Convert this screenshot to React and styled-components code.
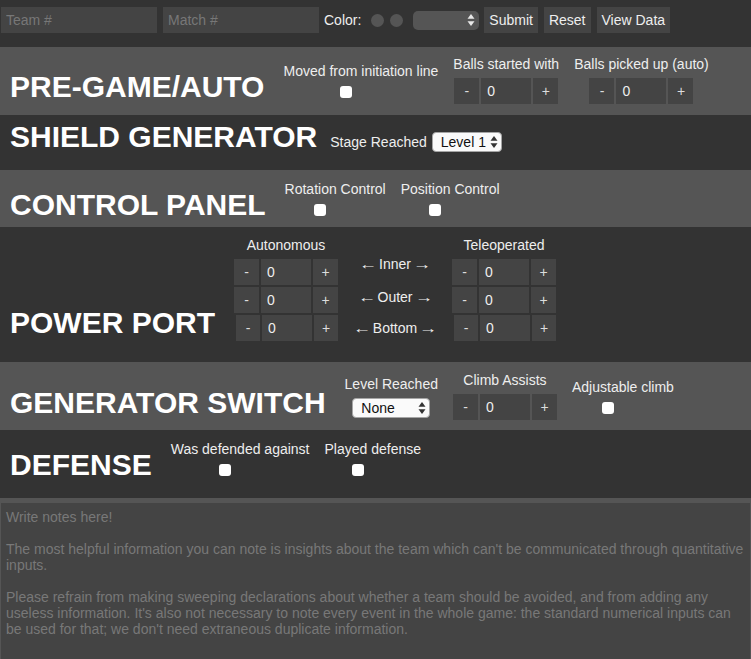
import React from "react";
import styled, { createGlobalStyle } from "styled-components";

const GlobalStyle = createGlobalStyle`
  html, body {
    margin: 0;
    padding: 0;
    background: #333;
    overflow: hidden;
  }
  body {
    font-family: "Liberation Sans", Arial, sans-serif;
    font-size: 14px;
    color: #eee;
  }
  * {
    box-sizing: border-box;
  }
`;

const TopBar = styled.div`
  display: flex;
  align-items: center;
  gap: 6px;
  height: 47px;
  padding: 7px 0 14px 1px;
`;

const TextInput = styled.input`
  width: 156px;
  height: 26px;
  margin: 0;
  padding: 0 5px;
  border: none;
  background: #444;
  color: #eee;
  font: 14px "Liberation Sans", Arial, sans-serif;
  &::placeholder {
    color: #777;
  }
`;

const ColorLabel = styled.span`
  margin: 0 4px 0 -1px;
  line-height: 16px;
`;

const ColorDot = styled.input`
  appearance: none;
  width: 13px;
  height: 13px;
  margin: 0;
  border-radius: 50%;
  background: #555;
`;

const SelectWrap = styled.div`
  position: relative;
  display: flex;
  margin: ${p => p.$margin || "0"};
`;

const Select = styled.select`
  appearance: none;
  width: ${p => p.$w}px;
  height: ${p => p.$h || 20}px;
  margin: 0;
  padding: 0 0 0 8px;
  border: ${p => (p.$dark ? "none" : "1px solid #a5a5a5")};
  border-radius: ${p => (p.$dark ? 5 : 4)}px;
  background: ${p => (p.$dark ? "#555" : "#fafafa")};
  color: #111;
  font: 14px "Liberation Sans", Arial, sans-serif;
  outline: none;
`;

const ArrowIcon = styled.svg`
  position: absolute;
  right: 4px;
  top: 50%;
  transform: translateY(-50%);
  pointer-events: none;
`;

const UpDown = ({ color }) => (
  <ArrowIcon width="8" height="12" viewBox="0 0 8 12">
    <polygon points="4,0 7.5,4.8 0.5,4.8" fill={color} />
    <polygon points="0.5,7.2 7.5,7.2 4,12" fill={color} />
  </ArrowIcon>
);

const BarButton = styled.button`
  height: 26px;
  margin: 0;
  padding: 0 5px;
  border: none;
  background: #444;
  color: #eee;
  font: 14px "Liberation Sans", Arial, sans-serif;
`;

const Section = styled.section`
  display: flex;
  align-items: flex-end;
  gap: 15px;
  height: ${p => p.$h}px;
  padding: 0 10px ${p => p.$pb}px;
  background: ${p => (p.$light ? "#555" : "#333")};
`;

const Title = styled.h2`
  margin: 0 ${p => p.$mr ?? 4}px 3px 0;
  font-size: 30px;
  line-height: 30px;
  font-weight: bold;
  color: #fff;
  white-space: nowrap;
`;

const Field = styled.div`
  display: flex;
  flex-direction: column;
  align-items: center;
  gap: ${p => p.$gap || 6}px;
`;

const InlineField = styled.div`
  display: flex;
  align-items: flex-end;
  gap: 5px;
`;

const Label = styled.span`
  line-height: 16px;
  white-space: nowrap;
  margin-bottom: ${p => p.$mb || 0}px;
`;

const Check = styled.input`
  appearance: none;
  width: 12px;
  height: 12px;
  margin: 0 30px 7px 0;
  border-radius: 3px;
  background: #fff;
`;

const CounterRow = styled.div`
  display: flex;
  gap: 2px;
  margin: 0 0 ${p => p.$mb ?? 1}px ${p => p.$nudge || 0}px;
`;

const StepButton = styled.button`
  width: 25px;
  height: 26px;
  margin: 0;
  padding: 0;
  border: none;
  background: #444;
  color: #ddd;
  font: 14px "Liberation Sans", Arial, sans-serif;
`;

const CountInput = styled.input`
  width: 50px;
  height: 26px;
  margin: 0;
  padding: 0 6px;
  border: none;
  background: #444;
  color: #eee;
  font: 14px "Liberation Sans", Arial, sans-serif;
`;

const PortGrid = styled.div`
  display: grid;
  grid-template-columns: 104px 114px 104px;
  grid-template-rows: 16px 26px 26px 26px;
  row-gap: 2px;
`;

const ColumnHead = styled.span`
  grid-column: ${p => p.$col};
  justify-self: center;
  line-height: 16px;
  margin-top: -4px;
`;

const PortLabel = styled.span`
  display: flex;
  align-items: baseline;
  gap: 4px;
  justify-self: center;
  align-self: start;
  line-height: 16px;
  white-space: nowrap;
  margin-top: ${p => p.$top}px;
`;

const Arrow = styled.span`
  display: inline-block;
  width: 14px;
  text-align: center;
  transform: scaleX(1.3);
`;

const Notes = styled.textarea`
  display: block;
  width: 100%;
  height: 165px;
  margin: 0;
  padding: 6px 5px;
  border: 1px solid #555;
  border-top-width: 5px;
  background: #444;
  color: #eee;
  font: 14px/16px "Liberation Sans", Arial, sans-serif;
  resize: none;
  &::placeholder {
    color: #787878;
  }
`;

const Counter = ({ nudge, mb }) => (
  <CounterRow $nudge={nudge} $mb={mb}>
    <StepButton>-</StepButton>
    <CountInput defaultValue="0" />
    <StepButton>+</StepButton>
  </CounterRow>
);

const CheckField = ({ label }) => (
  <Field $gap={7}>
    <Label>{label}</Label>
    <Check type="checkbox" />
  </Field>
);

const CounterField = ({ label }) => (
  <Field>
    <Label>{label}</Label>
    <Counter />
  </Field>
);

const portRows = [
  { name: "Inner", top: -3, nudge: 0 },
  { name: "Outer", top: 2, nudge: 0 },
  { name: "Bottom", top: 5, nudge: 2 }
];

const notesText =
  "Write notes here!\n\nThe most helpful information you can note is insights about the team which can't be communicated through quantitative inputs.\n\nPlease refrain from making sweeping declarations about whether a team should be avoided, and from adding any useless information. It's also not necessary to note every event in the whole game: the standard numerical inputs can be used for that; we don't need extraneous duplicate information.";

const App = () => (
  <>
    <GlobalStyle />
    <TopBar>
      <TextInput placeholder="Team #" />
      <TextInput placeholder="Match #" />
      <ColorLabel>Color:</ColorLabel>
      <ColorDot type="radio" name="color" />
      <ColorDot type="radio" name="color" />
      <SelectWrap $margin="0 -1px 0 4px">
        <Select $dark $w={66} $h={19} defaultValue="">
          <option value=""></option>
        </Select>
        <UpDown color="#e8e8e8" />
      </SelectWrap>
      <BarButton>Submit</BarButton>
      <BarButton>Reset</BarButton>
      <BarButton>View Data</BarButton>
    </TopBar>

    <Section $light $h={68} $pb={10}>
      <Title>PRE-GAME/AUTO</Title>
      <CheckField label="Moved from initiation line" />
      <CounterField label="Balls started with" />
      <CounterField label="Balls picked up (auto)" />
    </Section>

    <Section $h={55} $pb={15}>
      <Title $mr={-2}>SHIELD GENERATOR</Title>
      <InlineField>
        <Label $mb={5}>Stage Reached</Label>
        <SelectWrap $margin="0 0 3px 0">
          <Select $w={70} defaultValue="1">
            <option value="1">Level 1</option>
            <option value="2">Level 2</option>
            <option value="3">Level 3</option>
          </Select>
          <UpDown color="#333" />
        </SelectWrap>
      </InlineField>
    </Section>

    <Section $light $h={57} $pb={4}>
      <Title>CONTROL PANEL</Title>
      <CheckField label="Rotation Control" />
      <CheckField label="Position Control" />
    </Section>

    <Section $h={135} $pb={21}>
      <Title>POWER PORT</Title>
      <PortGrid>
        <ColumnHead $col={1}>Autonomous</ColumnHead>
        <ColumnHead $col={3}>Teleoperated</ColumnHead>
        {portRows.map(row => (
          <React.Fragment key={row.name}>
            <Counter nudge={row.nudge} mb={0} />
            <PortLabel $top={row.top}>
              <Arrow>{"\u2190"}</Arrow>
              {row.name}
              <Arrow>{"\u2192"}</Arrow>
            </PortLabel>
            <Counter nudge={row.nudge} mb={0} />
          </React.Fragment>
        ))}
      </PortGrid>
    </Section>

    <Section $light $h={68} $pb={9}>
      <Title>GENERATOR SWITCH</Title>
      <Field>
        <Label>Level Reached</Label>
        <SelectWrap $margin="0 0 3px 0">
          <Select $w={78} defaultValue="none">
            <option value="none">None</option>
            <option value="park">Park</option>
            <option value="hang">Hang</option>
          </Select>
          <UpDown color="#333" />
        </SelectWrap>
      </Field>
      <CounterField label="Climb Assists" />
      <CheckField label="Adjustable climb" />
    </Section>

    <Section $h={68} $pb={15}>
      <Title>DEFENSE</Title>
      <CheckField label="Was defended against" />
      <CheckField label="Played defense" />
    </Section>

    <Notes placeholder={notesText} />
  </>
);

export default App;
